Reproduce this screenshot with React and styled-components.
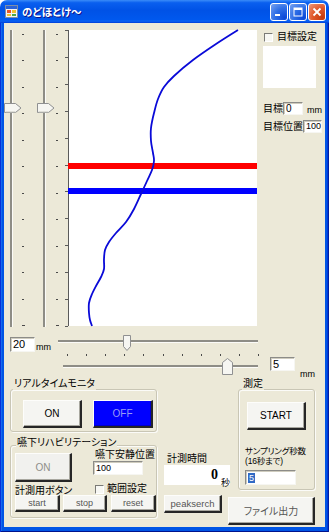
import React from 'react';
import styled, { createGlobalStyle } from 'styled-components';

const GlobalStyle = createGlobalStyle`
  html, body { margin: 0; padding: 0; background: #ffffff; }
  * { box-sizing: border-box; }
`;

const Window = styled.div`
  width: 329px;
  height: 532px;
  display: flex;
  flex-direction: column;
  font-family: "Liberation Sans", "Noto Sans CJK JP", sans-serif;
  font-feature-settings: "palt";
  font-size: 10px;
  color: #000;
`;

const TitleBar = styled.div`
  height: 23px;
  flex: none;
  display: flex;
  align-items: center;
  padding: 0 3px 0 5px;
  border-radius: 7px 7px 0 0;
  background: linear-gradient(180deg, #3a8cf8 0%, #0a5fef 12%, #0052e6 45%, #0058ee 85%, #0a62f2 92%, #003dd7 100%);
`;

const TitleText = styled.span`
  margin-left: 4px;
  color: #fff;
  font-family: "Noto Sans CJK JP", sans-serif;
  font-weight: bold;
  font-size: 10.5px;
  line-height: 12px;
  text-shadow: 1px 1px #0f1089;
`;

const CaptionButtons = styled.div`
  margin-left: auto;
  display: flex;
  gap: 1px;
`;

const CaptionButton = styled.div`
  width: 18px;
  height: 18px;
  border: 1px solid #fff;
  border-radius: 3px;
  display: flex;
  align-items: center;
  justify-content: center;
  background: ${p => p.$close
    ? 'radial-gradient(circle at 85% 85%, #c43a0c 0%, #e0582a 50%, #ee9a7c 100%)'
    : 'radial-gradient(circle at 85% 85%, #0a48d8 0%, #2d6ee6 50%, #7aa3f0 100%)'};
`;

const Frame = styled.div`
  flex: 1;
  display: flex;
  padding: 0 4px 5px 4px;
  background: #0055e5;
  box-shadow: inset 1px 0 #0831d9, inset -1px 0 #001ea0, inset 0 -1px #00138c, inset 2px 0 #166aee, inset -2px 0 #003bda;
`;

const Client = styled.div`
  flex: 1;
  display: flex;
  flex-direction: column;
  background: #ece9d8;
`;

const TopRow = styled.div`
  height: 307px;
  flex: none;
  display: flex;
`;

const Drawing = styled.svg`
  display: block;
  flex: none;
`;

const RightPanel = styled.div`
  width: 67px;
  display: flex;
  flex-direction: column;
  padding: 8px 0 0 5px;
`;

const CheckRow = styled.div`
  display: flex;
  align-items: center;
  height: 12px;
  padding-left: ${p => p.$pl || 0}px;
  margin-top: ${p => p.$mt || 0}px;
  gap: ${p => p.$gap || 4}px;
`;

const CheckBox = styled.span`
  width: 9px;
  height: 9px;
  flex: none;
  background: #f7f7f3;
  border: 1px solid;
  border-color: #7a7a76 #ffffff #ffffff #7a7a76;
`;

const PictureBox = styled.div`
  width: 53px;
  height: 42px;
  margin-top: 3px;
  background: #fff;
`;

const FieldRow = styled.div`
  display: flex;
  align-items: center;
  height: 13px;
  margin-top: ${p => p.$mt || 0}px;
`;

const Label = styled.span`
  display: block;
  flex: none;
  width: ${p => (p.$w ? `${p.$w}px` : 'auto')};
  font-size: ${p => p.$fs || 10}px;
  line-height: ${p => p.$lh || 12}px;
  letter-spacing: ${p => p.$ls || 0}px;
  margin: ${p => p.$m || '0'};
  padding-left: ${p => p.$pl || 0}px;
  color: ${p => p.$color || '#000'};
  white-space: nowrap;
`;

const TextBox = styled.div`
  flex: none;
  width: ${p => p.$w}px;
  height: ${p => p.$h}px;
  margin: ${p => p.$m || '0'};
  background: #fff;
  border: 1px solid;
  border-color: #8c8c88 #f6f6f2 #f6f6f2 #8c8c88;
  box-shadow: inset 1px 1px #cfccbe;
  display: flex;
  align-items: center;
  padding-left: 2px;
  font-size: ${p => p.$fs || 10}px;
  line-height: 1;
  overflow: hidden;
`;

const SliderRow = styled.div`
  height: ${p => p.$h}px;
  flex: none;
  display: flex;
  align-items: flex-start;
  padding-left: ${p => p.$pl}px;
`;

const UnitBox = styled.div`
  width: 46px;
  flex: none;
  display: flex;
  align-items: flex-start;
`;

const BottomSection = styled.div`
  flex: 1;
  display: flex;
  padding-left: 6px;
`;

const Column = styled.div`
  display: flex;
  flex-direction: column;
  width: ${p => p.$w}px;
  margin-left: ${p => p.$ml || 0}px;
`;

const GroupBox = styled.div`
  flex: none;
  display: flex;
  flex-direction: column;
  width: ${p => p.$w}px;
  height: ${p => p.$h}px;
  margin-top: ${p => p.$mt || 0}px;
  margin-left: ${p => p.$ml || 0}px;
  border: 1px solid #c9c6b5;
  border-radius: 3px;
  box-shadow: inset 1px 1px #fbfbf8, 1px 1px #fbfbf8;
`;

const GroupTitle = styled.span`
  align-self: flex-start;
  margin: ${p => p.$mt}px 0 0 ${p => p.$ml}px;
  padding: 0 1px;
  background: #ece9d8;
  font-size: 10px;
  line-height: 12px;
  white-space: nowrap;
`;

const Row = styled.div`
  display: flex;
  align-items: ${p => p.$align || 'flex-start'};
  margin-top: ${p => p.$mt || 0}px;
  padding-left: ${p => p.$pl || 0}px;
  gap: ${p => p.$gap || 0}px;
`;

const Stack = styled.div`
  display: flex;
  flex-direction: column;
  width: ${p => (p.$w ? `${p.$w}px` : 'auto')};
  margin: ${p => p.$m || '0'};
`;

const Button3D = styled.button`
  flex: none;
  width: ${p => p.$w}px;
  height: ${p => p.$h}px;
  margin: ${p => p.$m || '0'};
  padding: 0;
  font-family: inherit;
  font-feature-settings: "palt";
  font-size: ${p => p.$fs || 10}px;
  color: ${p => p.$color || '#000'};
  background: ${p => p.$bg || '#f5f5f2'};
  border-style: solid;
  border-width: 1px 2px 2px 1px;
  border-color: #fdfdfb #262626 #262626 #fdfdfb;
  box-shadow: inset -1px -1px ${p => p.$shade || '#a8a79f'};
  display: flex;
  align-items: center;
  justify-content: center;
  cursor: default;
`;

const OutputBox = styled.div`
  width: 66px;
  height: 20px;
  background: #fff;
  display: flex;
  justify-content: flex-end;
  align-items: flex-end;
`;

const BigValue = styled.span`
  font-family: "Liberation Serif", serif;
  font-weight: bold;
  font-size: 14px;
  line-height: 14px;
  margin-bottom: 3px;
`;

const SmallUnit = styled.span`
  font-family: "Noto Sans CJK JP", sans-serif;
  font-size: 9px;
  line-height: 10px;
  margin: 0 0 -3px 3px;
`;

const Selected = styled.span`
  background: #316ac5;
  color: #fff;
  padding: 0 1px;
  line-height: 10px;
  font-size: 9px;
`;

function AppIcon() {
  return (
    <Drawing width="13" height="13" viewBox="0 0 13 13">
      <rect x="0.5" y="0.5" width="12" height="12" fill="#f4f4f4" stroke="#7d8ea8" />
      <rect x="1" y="1" width="11" height="3" fill="#2a62d8" />
      <rect x="2" y="5" width="4" height="3" fill="#e8562a" />
      <rect x="7" y="5" width="4" height="3" fill="#f2c12e" />
      <rect x="2" y="9" width="4" height="2" fill="#f2c12e" />
      <rect x="7" y="9" width="4" height="2" fill="#4aa84a" />
    </Drawing>
  );
}

function VSlider({ w, track, tick, thumb }) {
  const ticks = Array.from({ length: 12 }, (_, i) => Math.round(11 + i * 26.45));
  return (
    <Drawing width={w} height={307}>
      <rect x={track - 1} y={7} width={2} height={297} fill="#8e8d86" />
      <rect x={track + 1} y={7} width={1} height={297} fill="#fbfbf8" />
      {ticks.map((y, i) => (
        <rect key={i} x={tick} y={y} width={i === 11 ? 3 : 2} height={1} fill="#4a4a4a" />
      ))}
      <path
        d={`M${thumb + 0.5} 80.5 h11 l5.5 4.5 l-5.5 4.5 h-11 z`}
        fill="#f6f6f2"
        stroke="#8f9091"
      />
      <path d={`M${thumb + 1.5} 89 h10`} stroke="#c8c8c0" />
    </Drawing>
  );
}

function smoothPath(pts) {
  let d = `M${pts[0][0]} ${pts[0][1]}`;
  for (let i = 0; i < pts.length - 1; i++) {
    const p0 = pts[i - 1] || pts[i];
    const p1 = pts[i];
    const p2 = pts[i + 1];
    const p3 = pts[i + 2] || p2;
    const c1x = p1[0] + (p2[0] - p0[0]) / 6;
    const c1y = p1[1] + (p2[1] - p0[1]) / 6;
    const c2x = p2[0] - (p3[0] - p1[0]) / 6;
    const c2y = p2[1] - (p3[1] - p1[1]) / 6;
    d += ` C${c1x.toFixed(1)} ${c1y.toFixed(1)} ${c2x.toFixed(1)} ${c2y.toFixed(1)} ${p2[0]} ${p2[1]}`;
  }
  return d;
}

const CURVE = [
  [174, 7], [152, 21], [129, 37], [110, 53], [100, 64], [94, 76], [90, 90], [87, 105],
  [87, 118], [89, 130], [90, 138], [88, 147], [83, 158], [77, 171], [70, 186], [62, 199],
  [52, 210], [45, 219], [41, 227], [40, 236], [40, 246], [37, 254], [32, 263], [28, 271],
  [25, 280], [25, 290], [26, 297], [28, 303],
];

function Chart() {
  const ticks = Array.from({ length: 12 }, (_, i) => Math.round(7 + i * 26.9));
  return (
    <Drawing width={194} height={307}>
      <rect x={4} y={7} width={189} height={296} fill="#fff" />
      <rect x={4} y={7} width={1} height={296} fill="#5a5a5a" />
      {ticks.map((y, i) => (
        <rect key={i} x={1} y={y} width={3} height={1} fill="#5a5a5a" />
      ))}
      <rect x={4} y={140} width={189} height={6} fill="#ff0000" />
      <rect x={4} y={165} width={189} height={6} fill="#0000ff" />
      <path d={smoothPath(CURVE)} fill="none" stroke="#0a0ad8" strokeWidth={1.8} strokeLinejoin="round" />
    </Drawing>
  );
}

function HSliderTop() {
  const ticks = Array.from({ length: 11 }, (_, i) => Math.round(11 + i * 19.1));
  return (
    <Drawing width={206} height={28}>
      <rect x={2} y={10} width={200} height={2} fill="#8e8d86" />
      <rect x={2} y={12} width={200} height={1} fill="#fbfbf8" />
      {ticks.map((x, i) => (
        <rect key={i} x={x} y={24} width={1} height={2} fill="#4a4a4a" />
      ))}
      <path d="M67.5 5.5 h7 v11 l-3.5 4 l-3.5 -4 z" fill="#f6f6f2" stroke="#8f9091" />
    </Drawing>
  );
}

function HSliderBottom() {
  return (
    <Drawing width={206} height={20}>
      <rect x={7} y={7} width={195} height={2} fill="#8e8d86" />
      <rect x={7} y={9} width={195} height={1} fill="#fbfbf8" />
      <path d="M166.5 4.5 l5 -4 l5 4 v12 h-10 z" fill="#f6f6f2" stroke="#8f9091" />
    </Drawing>
  );
}

export default function App() {
  return (
    <>
      <GlobalStyle />
      <Window>
        <TitleBar>
          <AppIcon />
          <TitleText>のどほとけ～</TitleText>
          <CaptionButtons>
            <CaptionButton>
              <Drawing width="10" height="10" viewBox="0 0 10 10">
                <rect x="1" y="7" width="5" height="2" fill="#fff" />
              </Drawing>
            </CaptionButton>
            <CaptionButton>
              <Drawing width="10" height="10" viewBox="0 0 10 10">
                <rect x="1" y="1" width="8" height="8" fill="none" stroke="#fff" strokeWidth="1" />
                <rect x="1" y="1" width="8" height="2" fill="#fff" />
              </Drawing>
            </CaptionButton>
            <CaptionButton $close>
              <Drawing width="10" height="10" viewBox="0 0 10 10">
                <path d="M1.5 1.5 L8.5 8.5 M8.5 1.5 L1.5 8.5" stroke="#fff" strokeWidth="1.8" />
              </Drawing>
            </CaptionButton>
          </CaptionButtons>
        </TitleBar>
        <Frame>
          <Client>
            <TopRow>
              <VSlider w={32} track={7} tick={18} thumb={0} />
              <VSlider w={28} track={8} tick={20} thumb={1} />
              <Chart />
              <RightPanel>
                <CheckRow $pl={1}>
                  <CheckBox />
                  <Label>目標設定</Label>
                </CheckRow>
                <PictureBox />
                <FieldRow $mt={14}>
                  <Label $w={20}>目標</Label>
                  <TextBox $w={20} $h={13} $fs={10}>0</TextBox>
                  <Label $fs={9} $m="2px 0 0 4px">mm</Label>
                </FieldRow>
                <FieldRow $mt={5}>
                  <Label $w={40}>目標位置</Label>
                  <TextBox $w={19} $h={13} $fs={9}>100</TextBox>
                </FieldRow>
              </RightPanel>
            </TopRow>

            <SliderRow $h={28} $pl={6}>
              <UnitBox>
                <TextBox $w={25} $h={15} $fs={11} $m="7px 0 0 0">20</TextBox>
                <Label $fs={9} $lh={10} $m="12px 0 0 1px">mm</Label>
              </UnitBox>
              <HSliderTop />
            </SliderRow>
            <SliderRow $h={20} $pl={52}>
              <HSliderBottom />
              <TextBox $w={25} $h={14} $fs={11} $m="-1px 0 0 8px">5</TextBox>
              <Label $fs={9} $lh={10} $m="11px 0 0 5px">mm</Label>
            </SliderRow>

            <BottomSection>
              <Column $w={147}>
                <GroupBox $w={147} $h={43} $mt={11}>
                  <GroupTitle $mt={-12} $ml={2}>リアルタイムモニタ</GroupTitle>
                  <Row $mt={10} $pl={12} $gap={11}>
                    <Button3D $w={59} $h={28}>ON</Button3D>
                    <Button3D $w={60} $h={28} $bg="#0000ff" $color="#9a9cf4" $shade="#0000c8">OFF</Button3D>
                  </Row>
                </GroupBox>
                <GroupBox $w={147} $h={73} $mt={13}>
                  <GroupTitle $mt={-9} $ml={5}>嚥下リハビリテーション</GroupTitle>
                  <Row $pl={4}>
                    <Stack $w={57}>
                      <Button3D $w={57} $h={29} $m="4px 0 0 0" $color="#8e8e8a" $bg="#f1f1ee">ON</Button3D>
                      <Label $lh={11} $m="3px 0 0 0">計測用ボタン</Label>
                    </Stack>
                    <Stack $m="0 0 0 21px">
                      <Label $pl={2}>嚥下安静位置</Label>
                      <TextBox $w={50} $h={14} $fs={9}>100</TextBox>
                      <CheckRow $pl={2} $mt={8} $gap={3}>
                        <CheckBox />
                        <Label>範囲設定</Label>
                      </CheckRow>
                    </Stack>
                  </Row>
                  <Row $pl={4} $mt={-1}>
                    <Button3D $w={45} $h={17} $fs={9} $color="#555">start</Button3D>
                    <Button3D $w={44} $h={17} $fs={9} $color="#555" $m="0 0 0 3px">stop</Button3D>
                    <Button3D $w={45} $h={17} $fs={9} $color="#555" $m="0 0 0 4px">reset</Button3D>
                  </Row>
                </GroupBox>
              </Column>

              <Column $w={151} $ml={7}>
                <Row $mt={11} $align="flex-end">
                  <Stack $w={66} $m="0 0 5px 0">
                    <Label $pl={3}>計測時間</Label>
                    <OutputBox>
                      <BigValue>0</BigValue>
                      <SmallUnit>秒</SmallUnit>
                    </OutputBox>
                  </Stack>
                  <GroupBox $w={77} $h={101} $ml={8}>
                    <GroupTitle $mt={-12} $ml={3}>測定</GroupTitle>
                    <Button3D $w={59} $h={28} $m="12px 0 0 8px">START</Button3D>
                    <Label $fs={8.5} $lh={10} $ls={-0.2} $m="16px 0 0 6px">サンプリング秒数</Label>
                    <Label $fs={8.5} $lh={10} $ls={-0.2} $m="0 0 0 6px">(16秒まで)</Label>
                    <TextBox $w={51} $h={15} $m="4px 0 0 6px">
                      <Selected>5</Selected>
                    </TextBox>
                  </GroupBox>
                </Row>
                <Row>
                  <Button3D $w={58} $h={18} $fs={9.5} $color="#555" $m="5px 0 0 0">peakserch</Button3D>
                  <Button3D $w={87} $h={28} $fs={10} $color="#555" $m="7px 0 0 6px">ファイル出力</Button3D>
                </Row>
              </Column>
            </BottomSection>
          </Client>
        </Frame>
      </Window>
    </>
  );
}
